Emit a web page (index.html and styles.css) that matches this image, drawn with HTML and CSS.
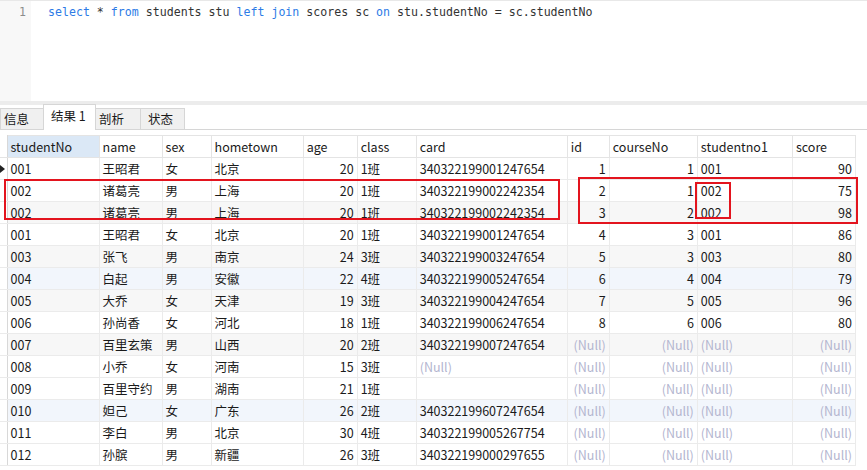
FILE: index.html
```html
<!DOCTYPE html>
<html lang="zh">
<head>
<meta charset="utf-8">
<link rel="stylesheet" href="styles.css">
</head>
<body>
<div class="editor">
  <div class="gutter"><span class="ln">1</span></div>
  <div class="code"><span class="kw">select</span> * <span class="kw">from</span> students stu <span class="kw">left</span> <span class="kw">join</span> scores sc <span class="kw">on</span> stu.studentNo = sc.studentNo</div>
</div>
<div class="split"></div>
<div class="tabs">
  <div class="tab">信息</div>
  <div class="tab active">结果 1</div>
  <div class="tab">剖析</div>
  <div class="tab">状态</div>
</div>
<div class="grid-wrap">
  <table class="grid">
    <colgroup>
      <col style="width:7px"><col style="width:92px"><col style="width:63px"><col style="width:49px"><col style="width:92px"><col style="width:54px"><col style="width:59px"><col style="width:151px"><col style="width:42px"><col style="width:88px"><col style="width:95px"><col style="width:63px">
    </colgroup>
    <thead>
      <tr><th class="ind"></th><th class="sel">studentNo</th><th>name</th><th>sex</th><th>hometown</th><th>age</th><th>class</th><th>card</th><th>id</th><th>courseNo</th><th>studentno1</th><th>score</th></tr>
    </thead>
    <tbody>
      <tr><td class="ind cur"><span class="arrow"></span></td><td>001</td><td>王昭君</td><td>女</td><td>北京</td><td class="n">20</td><td>1班</td><td>340322199001247654</td><td class="n">1</td><td class="n">1</td><td>001</td><td class="n">90</td></tr>
      <tr><td class="ind"></td><td>002</td><td>诸葛亮</td><td>男</td><td>上海</td><td class="n">20</td><td>1班</td><td>340322199002242354</td><td class="n">2</td><td class="n">1</td><td>002</td><td class="n">75</td></tr>
      <tr class="alt"><td class="ind"></td><td>002</td><td>诸葛亮</td><td>男</td><td>上海</td><td class="n">20</td><td>1班</td><td>340322199002242354</td><td class="n">3</td><td class="n">2</td><td>002</td><td class="n">98</td></tr>
      <tr><td class="ind"></td><td>001</td><td>王昭君</td><td>女</td><td>北京</td><td class="n">20</td><td>1班</td><td>340322199001247654</td><td class="n">4</td><td class="n">3</td><td>001</td><td class="n">86</td></tr>
      <tr class="alt"><td class="ind"></td><td>003</td><td>张飞</td><td>男</td><td>南京</td><td class="n">24</td><td>3班</td><td>340322199003247654</td><td class="n">5</td><td class="n">3</td><td>003</td><td class="n">80</td></tr>
      <tr class="hl"><td class="ind"></td><td>004</td><td>白起</td><td>男</td><td>安徽</td><td class="n">22</td><td>4班</td><td>340322199005247654</td><td class="n">6</td><td class="n">4</td><td>004</td><td class="n">79</td></tr>
      <tr class="alt"><td class="ind"></td><td>005</td><td>大乔</td><td>女</td><td>天津</td><td class="n">19</td><td>3班</td><td>340322199004247654</td><td class="n">7</td><td class="n">5</td><td>005</td><td class="n">96</td></tr>
      <tr><td class="ind"></td><td>006</td><td>孙尚香</td><td>女</td><td>河北</td><td class="n">18</td><td>1班</td><td>340322199006247654</td><td class="n">8</td><td class="n">6</td><td>006</td><td class="n">80</td></tr>
      <tr class="alt"><td class="ind"></td><td>007</td><td>百里玄策</td><td>男</td><td>山西</td><td class="n">20</td><td>2班</td><td>340322199007247654</td><td class="n null">(Null)</td><td class="n null">(Null)</td><td class="null">(Null)</td><td class="n null">(Null)</td></tr>
      <tr><td class="ind"></td><td>008</td><td>小乔</td><td>女</td><td>河南</td><td class="n">15</td><td>3班</td><td class="null">(Null)</td><td class="n null">(Null)</td><td class="n null">(Null)</td><td class="null">(Null)</td><td class="n null">(Null)</td></tr>
      <tr><td class="ind"></td><td>009</td><td>百里守约</td><td>男</td><td>湖南</td><td class="n">21</td><td>1班</td><td></td><td class="n null">(Null)</td><td class="n null">(Null)</td><td class="null">(Null)</td><td class="n null">(Null)</td></tr>
      <tr class="hl"><td class="ind"></td><td>010</td><td>妲己</td><td>女</td><td>广东</td><td class="n">26</td><td>2班</td><td>340322199607247654</td><td class="n null">(Null)</td><td class="n null">(Null)</td><td class="null">(Null)</td><td class="n null">(Null)</td></tr>
      <tr><td class="ind"></td><td>011</td><td>李白</td><td>男</td><td>北京</td><td class="n">30</td><td>4班</td><td>340322199005267754</td><td class="n null">(Null)</td><td class="n null">(Null)</td><td class="null">(Null)</td><td class="n null">(Null)</td></tr>
      <tr><td class="ind"></td><td>012</td><td>孙膑</td><td>男</td><td>新疆</td><td class="n">26</td><td>3班</td><td>340322199000297655</td><td class="n null">(Null)</td><td class="n null">(Null)</td><td class="null">(Null)</td><td class="n null">(Null)</td></tr>
    </tbody>
  </table>
  <div class="mark mark-a"></div>
  <div class="mark mark-b"></div>
  <div class="mark mark-c"></div>
</div>
</body>
</html>
```
FILE: styles.css
```css
* { box-sizing: border-box; }
html, body { margin: 0; padding: 0; background: #fff; }
body {
  width: 867px;
  height: 470px;
  overflow: hidden;
  font-family: "Noto Sans CJK SC", "Noto Sans", sans-serif;
  font-size: 12.5px;
  color: #1a1a1a;
}
.editor {
  display: flex;
  height: 101px;
  border-top: 1px solid #e8e8e8;
}
.gutter {
  width: 31px;
  background: #f8f8f8;
  display: flex;
  justify-content: flex-end;
  padding: 3px 5px 0 0;
}
.ln {
  font-family: "DejaVu Sans Mono", monospace;
  font-size: 11.6px;
  color: #8c8c8c;
  line-height: 16px;
}
.code {
  padding: 3px 0 0 17px;
  font-family: "DejaVu Sans Mono", monospace;
  font-size: 11.6px;
  line-height: 16px;
  color: #333;
  white-space: pre;
}
.kw { color: #2d7be6; }
.split {
  height: 4px;
  background: #ececec;
}
.tabs {
  display: flex;
  align-items: flex-end;
  height: 25px;
  border-bottom: 1px solid #d6d6d6;
  padding-left: 0;
}
.tab {
  height: 21px;
  line-height: 20px;
  padding: 0 3px;
  background: #f0f0f0;
  border: 1px solid #d6d6d6;
  border-bottom: none;
  margin-right: -1px;
  font-size: 12.5px;
  color: #1a1a1a;
}
.tab:nth-child(1) { width: 44px; }
.tab:nth-child(2) { width: 53px; }
.tab:nth-child(3) { width: 46px; }
.tab:nth-child(4) { width: 45px; padding-left: 7px; }
.tab.active {
  height: 25px;
  background: #fff;
  line-height: 22px;
  margin-bottom: -1px;
  padding-left: 7px;
  height: 26px;
  position: relative;
}
.grid-wrap {
  position: relative;
  margin-top: 5px;
  width: 856px;
}
.grid {
  border-collapse: collapse;
  table-layout: fixed;
  width: 856px;
}
.grid th, .grid td {
  height: 22px;
  padding: 0 3px 0 3px;
  border: 1px solid #ebebeb;
  white-space: nowrap;
  overflow: hidden;
  font-weight: normal;
  text-align: left;
  line-height: 20px;
}
.grid th { background: #fff; border-color: #e4e4e4; }
.grid th.sel { background: #dbe8f6; }
.grid .ind { padding: 0; border-left: none; border-right: 1px solid #d8d8d8; background: #fff; position: relative; }
.grid th.ind { border-top: none; }
.grid td.n { text-align: right; }
.grid td.null { color: #b3b5cf; }
.grid tr.alt td { background: #f7f7f7; }
.grid tr.hl td { background: #f2f6fc; }
.grid tr td.ind { background: #fff; }
.arrow {
  position: absolute;
  left: 0;
  top: 7px;
  width: 0;
  height: 0;
  border-top: 4px solid transparent;
  border-bottom: 4px solid transparent;
  border-left: 5px solid #222;
}
.mark {
  position: absolute;
  border: 2px solid #e3141e;
}
.mark-a { left: 4px; top: 44px; width: 556px; height: 41px; }
.mark-b { left: 578px; top: 42px; width: 280px; height: 47px; }
.mark-c { left: 695px; top: 47px; width: 36px; height: 37px; }
```
